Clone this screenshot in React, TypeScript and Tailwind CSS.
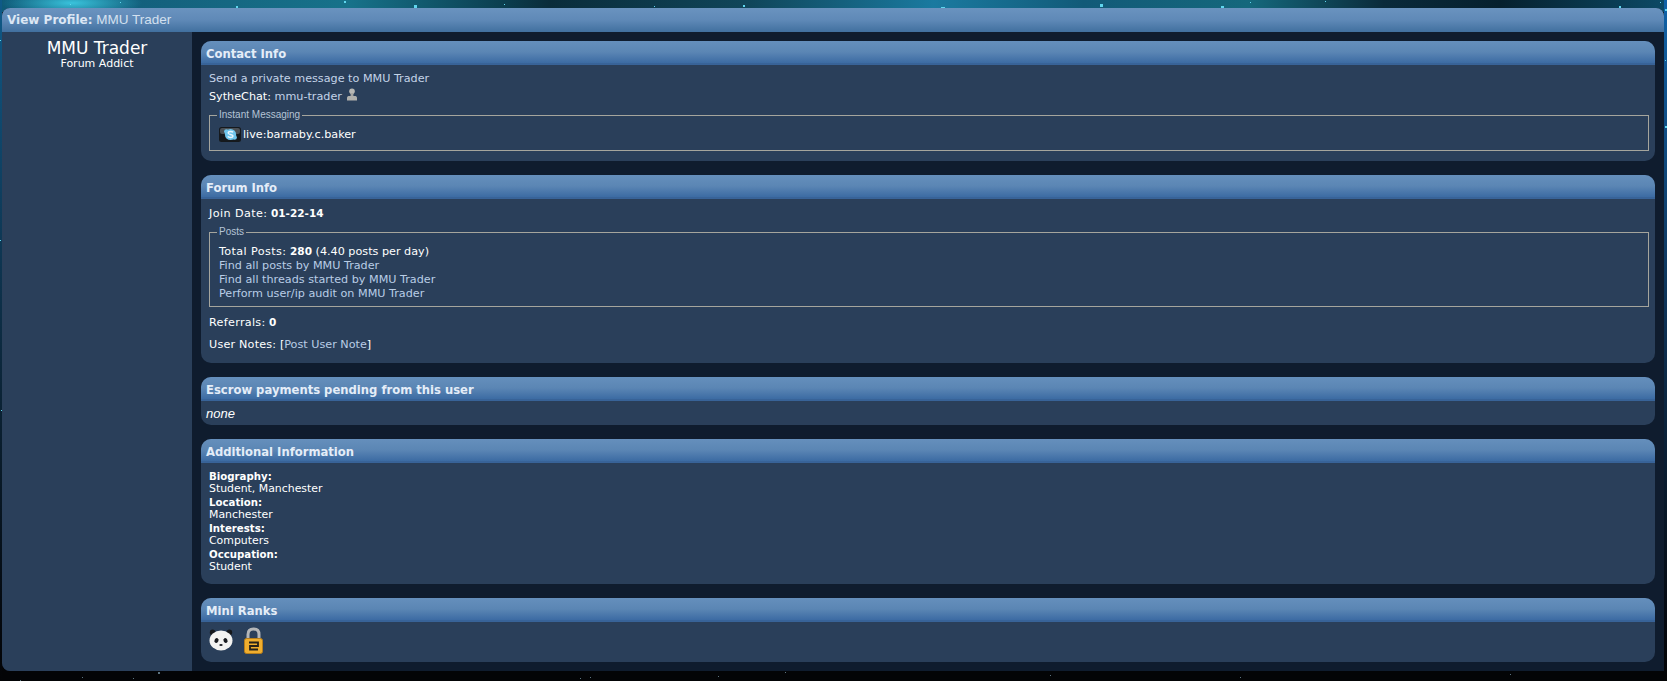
import React from 'react';

const stars = [
  [70, 4, 1], [120, 2, 1], [236, 6, 2], [264, 8, 1], [344, 1, 2], [414, 5, 3], [463, 9, 2], [504, 4, 1], [654, 6, 1], [743, 5, 2],
  [941, 7, 4], [1062, 8, 1], [1100, 4, 3], [1221, 6, 3], [1250, 2, 1], [1321, 8, 2], [1325, 1, 1], [1619, 6, 2], [1660, 2, 1],
  [1665, 9, 2], [1665, 126, 2], [1665, 60, 1], [0, 40, 1], [0, 240, 1], [1, 410, 1],
  [158, 672, 2], [82, 677, 1], [133, 678, 1], [20, 680, 1], [580, 678, 1], [590, 677, 1], [718, 676, 1], [785, 672, 1], [740, 670, 1], [1050, 675, 1], [1240, 677, 1], [1510, 674, 1],
];

function Panel({ title, children, bodyClass }: { title: string; children: React.ReactNode; bodyClass?: string }) {
  return (
    <section className="rounded-[10px] bg-[#2a3f5a] overflow-hidden">
      <h2 className="h-6 pl-[5px] pt-[6px] bg-gradient-to-b from-[#658fbc] via-[#5b86b4] to-[#3c6ba3] border-b-2 border-[#386398] text-[11.6px] leading-[14px] font-bold text-[#e4edf8]">
        {title}
      </h2>
      <div className={bodyClass}>{children}</div>
    </section>
  );
}

function Fieldset({ legend, children, className }: { legend: string; children: React.ReactNode; className?: string }) {
  return (
    <fieldset className={`border border-[#a5a59d] pl-[9px] pr-2 ${className ?? ''}`}>
      <legend className="-ml-[2px] px-[2px] text-[10px] leading-[12px] text-[#b5c4d6] font-['Liberation_Sans','DejaVu_Sans',sans-serif]">{legend}</legend>
      {children}
    </fieldset>
  );
}

function UserIcon() {
  return (
    <svg width="10" height="13" viewBox="0 0 10 13" className="inline-block ml-[5px] -mt-[6px] align-middle">
      <circle cx="5" cy="3.2" r="2.8" fill="#b8b8b4" />
      <rect x="3.6" y="5" width="2.8" height="3" fill="#a5a5a1" />
      <path d="M0 12.5V9.6C0 8.6 1 8 2.2 8h5.6C9 8 10 8.6 10 9.6v2.9z" fill="#b0b0ac" />
    </svg>
  );
}

function SkypeIcon() {
  return (
    <svg width="22" height="15" viewBox="0 0 22 15" className="shrink-0">
      <rect x="0" y="0" width="22" height="15" rx="2.5" fill="#15191d" />
      <rect x="1" y="1" width="20" height="6" rx="2" fill="#4a5056" />
      <circle cx="11.5" cy="7.5" r="5.6" fill="#6fc6ee" />
      <circle cx="7.4" cy="4.6" r="2.3" fill="#6fc6ee" />
      <circle cx="15.6" cy="10.4" r="2.3" fill="#6fc6ee" />
      <path d="M14.2 5.3C13 4.3 9.4 4.1 9.1 5.9 8.9 7.9 14.2 7 14 9.2 13.8 10.9 10 10.7 8.7 9.5" fill="none" stroke="#e8f7ff" strokeWidth="1.4" />
    </svg>
  );
}

function PandaIcon() {
  return (
    <svg width="24" height="22" viewBox="0 0 24 22" className="shrink-0">
      <circle cx="3.6" cy="3.4" r="2.8" fill="#15181c" />
      <circle cx="20.4" cy="3.4" r="2.8" fill="#15181c" />
      <ellipse cx="12" cy="11.5" rx="11.5" ry="10" fill="#f3f3f1" />
      <ellipse cx="7.5" cy="11.5" rx="2" ry="2.5" fill="#1a1c20" transform="rotate(25 7.5 11.5)" />
      <ellipse cx="16.5" cy="11.5" rx="2" ry="2.5" fill="#1a1c20" transform="rotate(-25 16.5 11.5)" />
      <ellipse cx="12" cy="16" rx="1.7" ry="1.1" fill="#1a1c20" />
    </svg>
  );
}

function LockIcon() {
  return (
    <svg width="19" height="27" viewBox="0 0 19 27" className="shrink-0">
      <path d="M4 13V7.5C4 4 6.2 2 9.5 2S15 4 15 7.5V13" fill="none" stroke="#b4b6b8" strokeWidth="3" />
      <rect x="0.5" y="11.5" width="18" height="15" rx="2" fill="#f0ae2e" stroke="#b67e1c" />
      <path d="M5 15.5h9v3.5H6v3.5h8" fill="none" stroke="#27221a" strokeWidth="1.8" />
    </svg>
  );
}

export default function App() {
  return (
    <div className="relative h-[681px] overflow-hidden pt-2 pl-[2px] pr-[3px] bg-[#030406] bg-[radial-gradient(ellipse_70px_14px_at_72px_3px,#39c3dc,transparent),linear-gradient(90deg,#0f5a78_0%,#14627e_10%,#17728a_21%,#0b3f50_30%,#0a2c3a_33%,#10465a_45%,#1a7aa0_56%,#125a78_65%,#15687c_75%,#0a2a3a_83%,#06202e_90%,#0c4a66_100%)] bg-[length:100%_100%,100%_12px] bg-no-repeat font-['DejaVu_Sans','Verdana',sans-serif]">
      {/* galaxy backdrop: side strips and star specks */}
      <div className="absolute inset-y-0 left-0 w-[2px] bg-gradient-to-b from-[#0f5a88] to-[#030406]" />
      <div className="absolute inset-y-0 right-0 w-[3px] bg-gradient-to-b from-[#0f62a8] to-[#030406]" />
      <svg width="1667" height="681" className="absolute inset-0">
        {stars.map(([x, y, s], i) => (
          <rect key={i} x={x} y={y} width={s} height={s} fill={y > 600 ? '#5d7480' : '#5fd6ee'} />
        ))}
      </svg>

      <div className="relative h-[663px] rounded-t-[8px] rounded-bl-[8px] overflow-hidden bg-[#0f1c2e] flex flex-col">
        <h1 className="h-6 shrink-0 pl-[5px] pt-1 bg-gradient-to-b from-[#6a93bf] via-[#5f89b7] to-[#41709f] text-[12px] leading-[16px] text-[#dce7f4]">
          <span className="font-bold">View Profile:</span> <span className="font-normal font-['Liberation_Sans','DejaVu_Sans',sans-serif] text-[13.5px] text-[#d3e0ef]">MMU Trader</span>
        </h1>

        <div className="flex flex-1 min-h-0">
          <aside className="w-[190px] shrink-0 bg-[#2a3f5a] pt-[7px] text-center text-white">
            <div className="text-[17px] leading-[19px]">MMU Trader</div>
            <div className="text-[11px] leading-[12px]">Forum Addict</div>
          </aside>

          <main className="flex-1 min-w-0 pt-[9px] pl-[9px] pr-[9px] flex flex-col gap-[14px] text-[11.2px] leading-[14px] text-white">
            <Panel title="Contact Info" bodyClass="h-24 pl-[8px] pr-[6px] pt-[4px]">
              <div className="mt-[3px] text-[#c3d3e8]">Send a private message to MMU Trader</div>
              <div className="mt-[4px] h-[15px]">
                SytheChat: <span className="text-[#c3d3e8]">mmu-trader</span>
                <UserIcon />
              </div>
              <Fieldset legend="Instant Messaging" className="mt-[4px] h-[42px]">
                <div className="flex items-center gap-[2px] mt-[6px] text-white">
                  <SkypeIcon />
                  <span>live:barnaby.c.baker</span>
                </div>
              </Fieldset>
            </Panel>

            <Panel title="Forum Info" bodyClass="h-[164px] pl-[8px] pr-[6px]">
              <div className="pt-[7px]">
                <span className="tracking-[0.4px]">Join Date:</span> <b className="text-[10.5px]">01-22-14</b>
              </div>
              <Fieldset legend="Posts" className="mt-[5px] h-[81px]">
                <div className="mt-[6px]">
                  <span className="tracking-[0.4px]">Total Posts:</span> <b className="text-[10.5px]">280</b> (4.40 posts per day)
                </div>
                <div className="text-[#b9cde6]">Find all posts by MMU Trader</div>
                <div className="text-[#b9cde6]">Find all threads started by MMU Trader</div>
                <div className="text-[#b9cde6]">Perform user/ip audit on MMU Trader</div>
              </Fieldset>
              <div className="mt-[8px]">
                <span className="tracking-[0.3px]">Referrals:</span> <b className="text-[10.5px]">0</b>
              </div>
              <div className="mt-[8px]">
                <span className="tracking-[0.2px]">User Notes:</span> [<span className="text-[#b9cde6]">Post User Note</span>]
              </div>
            </Panel>

            <Panel title="Escrow payments pending from this user" bodyClass="h-6 pl-[5px] pt-[5px]">
              <i className="block text-[13px] leading-[16px] font-['Liberation_Sans','DejaVu_Sans',sans-serif]">none</i>
            </Panel>

            <Panel title="Additional Information" bodyClass="h-[121px] pl-2 pt-[8px] text-[10.9px] leading-[12px]">
              {[
                ['Biography', 'Student, Manchester'],
                ['Location', 'Manchester'],
                ['Interests', 'Computers'],
                ['Occupation', 'Student'],
              ].map(([label, value]) => (
                <div key={label} className="mb-[2px]">
                  <b className="block text-[10.2px]">{label}:</b>
                  <div>{value}</div>
                </div>
              ))}
            </Panel>

            <Panel title="Mini Ranks" bodyClass="h-10 pl-2 pb-1 flex items-center gap-[11px]">
              <PandaIcon />
              <LockIcon />
            </Panel>
          </main>
        </div>
      </div>
    </div>
  );
}
